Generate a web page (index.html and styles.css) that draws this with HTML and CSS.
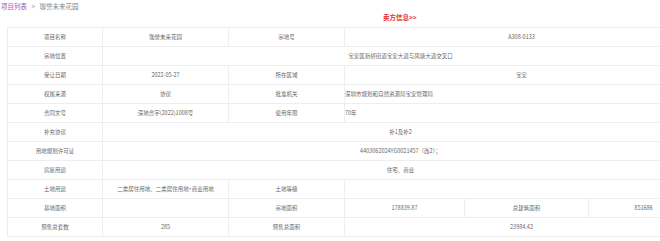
FILE: index.html
```html
<!DOCTYPE html>
<html lang="zh-CN">
<head>
    <meta charset="UTF-8">
    <meta name="viewport" content="width=device-width, initial-scale=1.0">
    <title>珈誉未来花园</title>
    <link rel="stylesheet" href="styles.css">
</head>
<body>
    <div class="page">
        <div class="crumb">
            <a href="#">项目列表</a> <span class="sep">&gt;</span> 珈誉未来花园
        </div>
        <div class="seller"><a href="#">卖方信息&gt;&gt;</a></div>

        <table class="info">
            <colgroup>
                <col class="c1"><col class="c2"><col class="c3"><col class="c4"><col class="c5"><col class="c6">
            </colgroup>
            <tr>
                <td>项目名称</td>
                <td>珈誉未来花园</td>
                <td>宗地号</td>
                <td colspan="3">A308-0133</td>
            </tr>
            <tr>
                <td>宗地位置</td>
                <td colspan="5">宝安区新桥街道宝安大道与凤塘大道交叉口</td>
            </tr>
            <tr>
                <td>受让日期</td>
                <td>2022-05-27</td>
                <td>所在区域</td>
                <td colspan="3">宝安</td>
            </tr>
            <tr>
                <td>权属来源</td>
                <td>协议</td>
                <td>批准机关</td>
                <td colspan="3" class="left">深圳市规划和自然资源局宝安管理局</td>
            </tr>
            <tr>
                <td>合同文号</td>
                <td>深地合字(2022)1008号</td>
                <td>使用年限</td>
                <td colspan="3" class="left">70年</td>
            </tr>
            <tr>
                <td>补充协议</td>
                <td colspan="5">补1及补2</td>
            </tr>
            <tr>
                <td>用地规划许可证</td>
                <td colspan="5">4403062024YG0021457（改2）；</td>
            </tr>
            <tr>
                <td>房屋用途</td>
                <td colspan="5">住宅、商业</td>
            </tr>
            <tr>
                <td>土地用途</td>
                <td>二类居住用地、二类居住用地+商业用地</td>
                <td>土地等级</td>
                <td colspan="3"></td>
            </tr>
            <tr>
                <td>基地面积</td>
                <td></td>
                <td>宗地面积</td>
                <td>178839.87</td>
                <td>总建筑面积</td>
                <td>851686</td>
            </tr>
            <tr>
                <td>预售总套数</td>
                <td>285</td>
                <td>预售总面积</td>
                <td colspan="3">23984.42</td>
            </tr>
        </table>
    </div>
</body>
</html>
```

FILE: styles.css
```css
html, body {
    margin: 0;
    padding: 0;
    background-color: #ffffff;
}
body {
    font-family: "Noto Sans CJK SC", "Noto Sans", sans-serif;
    color: #666666;
}
.page {
    width: 660px;
    overflow: hidden;
}
.crumb {
    font-size: 6.5px;
    line-height: 12px;
    padding-left: 1px;
    color: #888888;
    word-spacing: 3px;
}
.crumb a {
    color: #9b59b6;
    text-decoration: none;
}
.seller {
    font-size: 6.5px;
    font-weight: bold;
    line-height: 10px;
    padding-left: 383px;
    margin-bottom: 5px;
}
.seller a {
    color: #e8312f;
    text-decoration: none;
}
.info {
    margin-left: 7px;
    border-collapse: collapse;
    table-layout: fixed;
    width: 691px;
}
.c1 { width: 95px; }
.c2 { width: 126px; }
.c3 { width: 116px; }
.c4 { width: 120px; }
.c5 { width: 124px; }
.c6 { width: 110px; }
.info td {
    border: 1px solid #eeeeee;
    height: 18px;
    padding: 0;
    text-align: center;
    font-size: 5.5px;
    color: #666666;
    white-space: nowrap;
}
.info td.left {
    text-align: left;
}
```
